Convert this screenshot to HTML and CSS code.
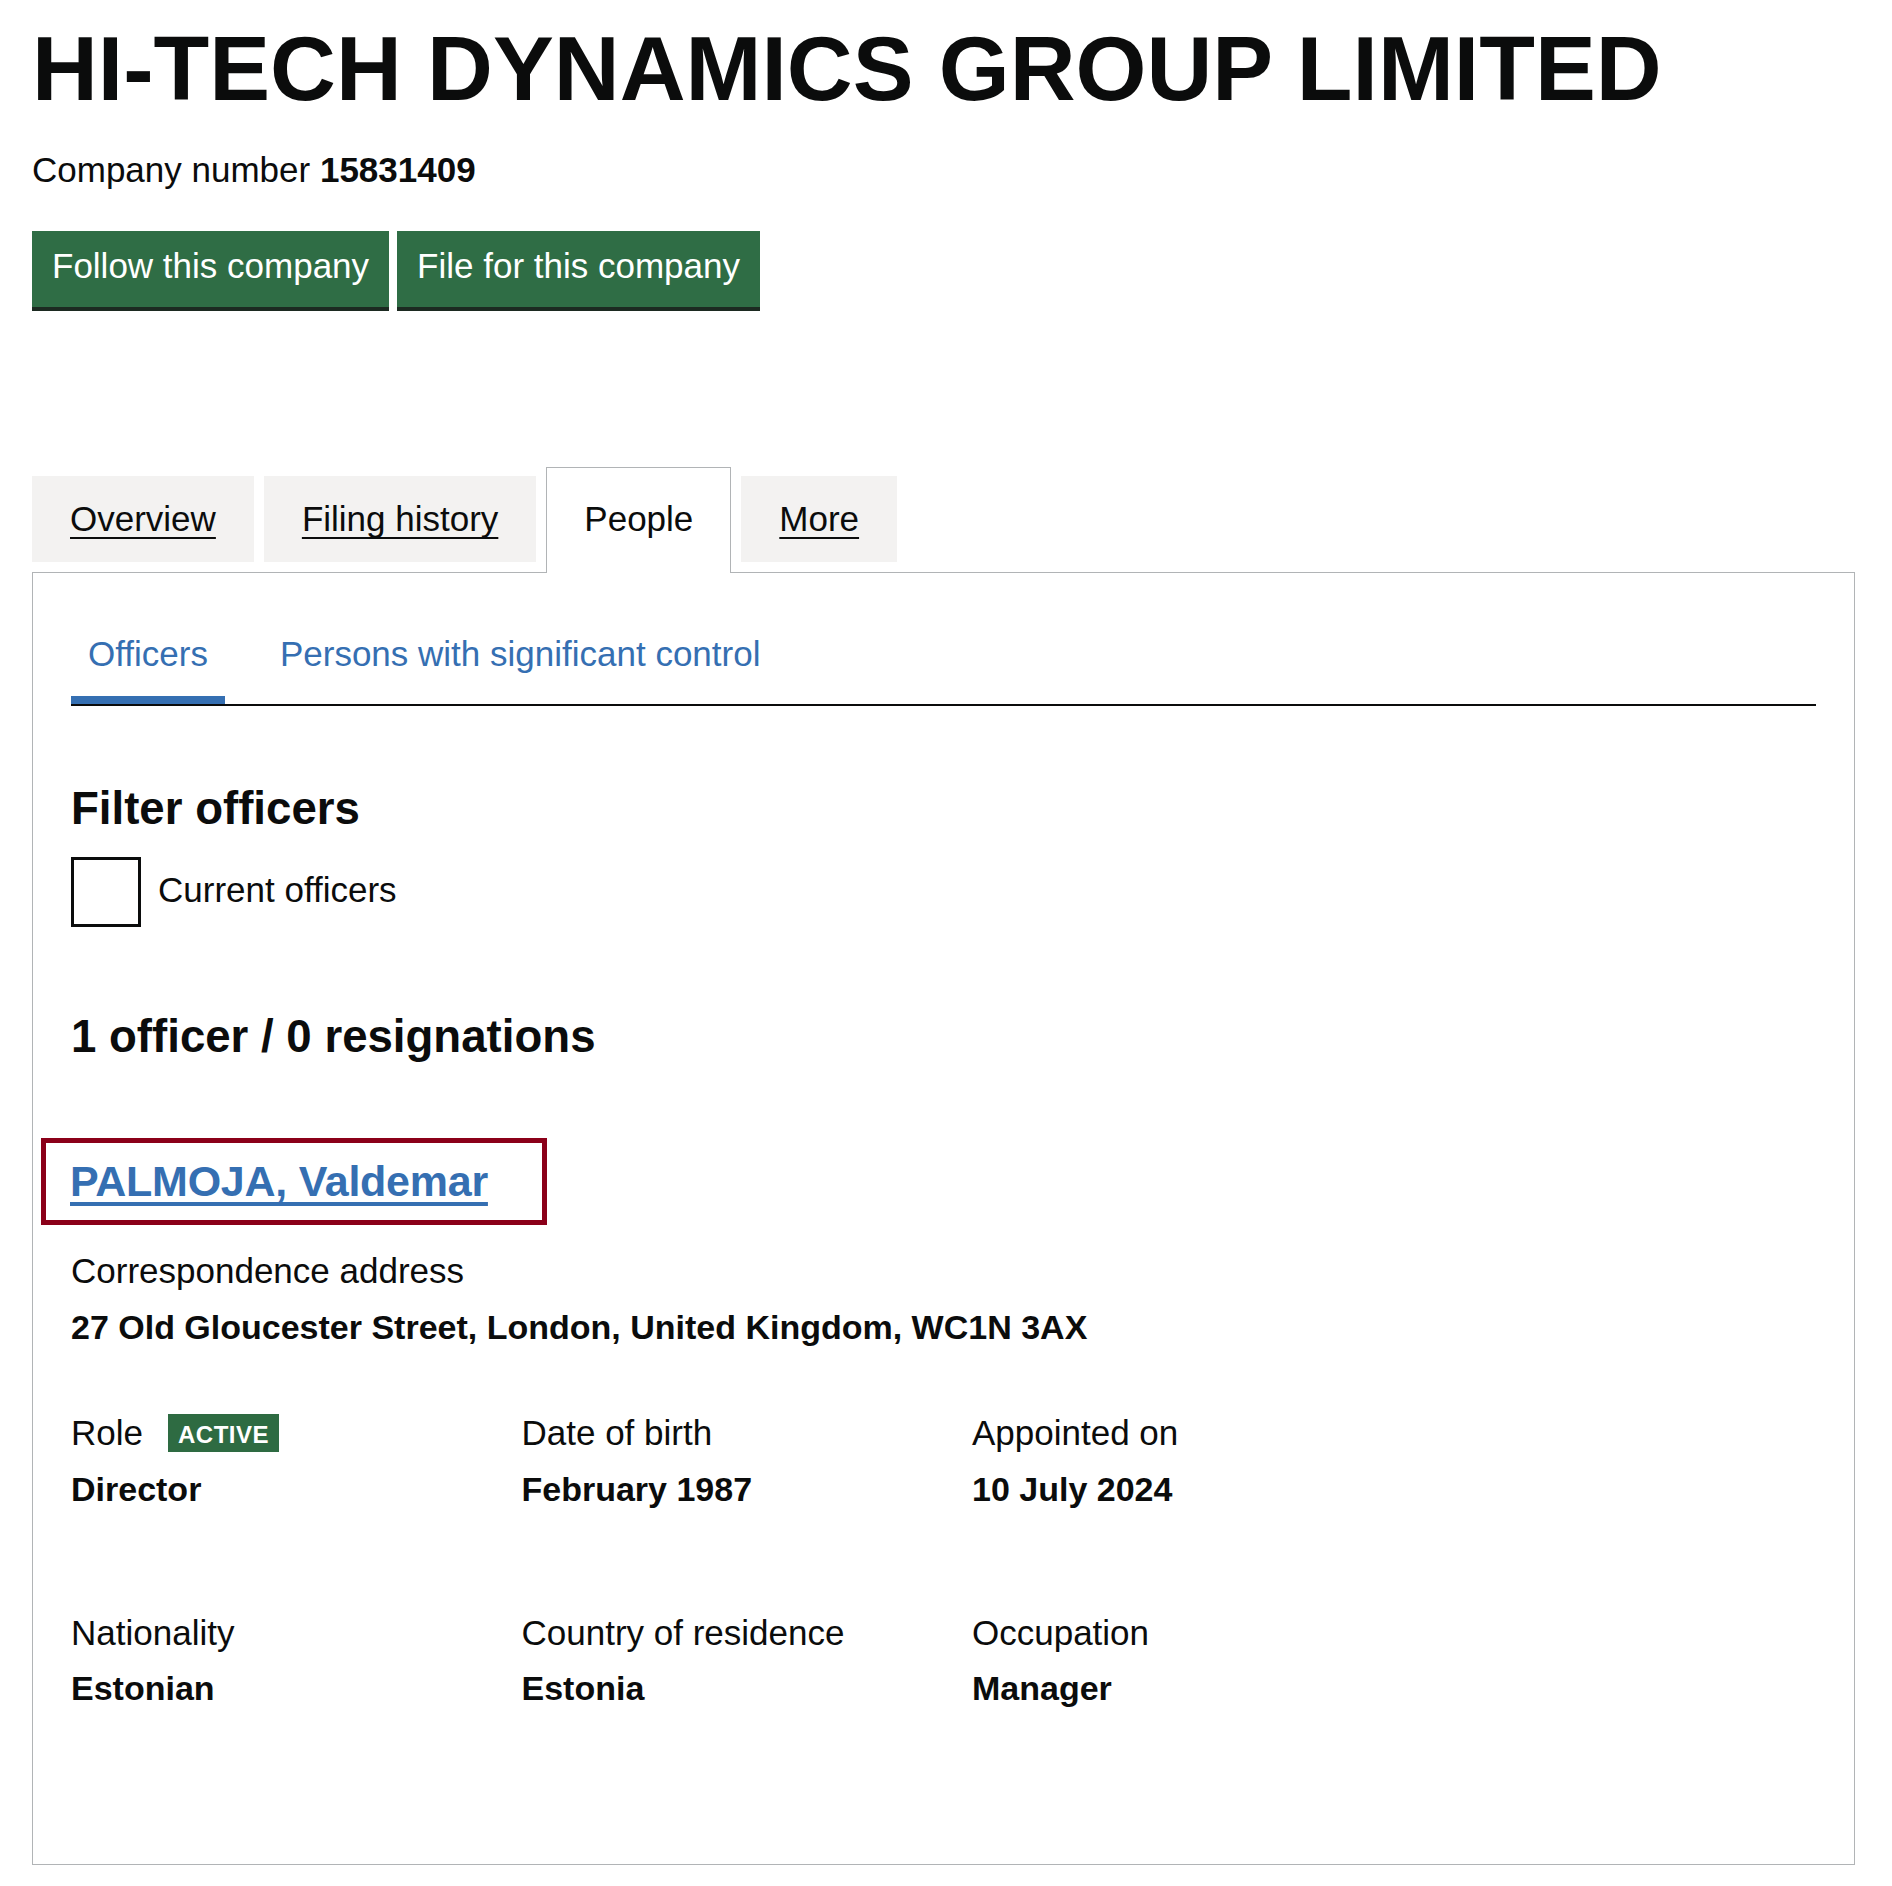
FILE: index.html
```html
<!DOCTYPE html>
<html lang="en">
<head>
<meta charset="utf-8">
<title>HI-TECH DYNAMICS GROUP LIMITED people - Find and update company information</title>
<link rel="stylesheet" href="styles.css">
</head>
<body>
<main class="page">
  <h1 class="company-name">HI-TECH DYNAMICS GROUP LIMITED</h1>
  <p class="company-number">Company number <strong>15831409</strong></p>
  <div class="actions">
    <a class="button" href="#">Follow this company</a>
    <a class="button" href="#">File for this company</a>
  </div>

  <ul class="tabs">
    <li class="tab"><a href="#">Overview</a></li>
    <li class="tab"><a href="#">Filing history</a></li>
    <li class="tab tab--selected"><span>People</span></li>
    <li class="tab"><a href="#">More</a></li>
  </ul>

  <section class="panel">
    <ul class="subnav">
      <li class="subnav-item subnav-item--active"><a href="#">Officers</a></li>
      <li class="subnav-item"><a href="#">Persons with significant control</a></li>
    </ul>

    <h2 class="heading-m filter-heading">Filter officers</h2>
    <label class="checkbox-row">
      <span class="checkbox"></span>
      <span class="checkbox-label">Current officers</span>
    </label>

    <h2 class="heading-m count-heading">1 officer / 0 resignations</h2>

    <div class="officer">
      <div class="highlight">
        <h2 class="officer-name"><a href="#">PALMOJA, Valdemar</a></h2>
      </div>

      <dl class="address">
        <dt>Correspondence address</dt>
        <dd>27 Old Gloucester Street, London, United Kingdom, WC1N 3AX</dd>
      </dl>

      <div class="details">
        <dl class="detail">
          <dt>Role<span class="tag">Active</span></dt>
          <dd>Director</dd>
        </dl>
        <dl class="detail">
          <dt>Date of birth</dt>
          <dd>February 1987</dd>
        </dl>
        <dl class="detail">
          <dt>Appointed on</dt>
          <dd>10 July 2024</dd>
        </dl>
        <dl class="detail">
          <dt>Nationality</dt>
          <dd>Estonian</dd>
        </dl>
        <dl class="detail">
          <dt>Country of residence</dt>
          <dd>Estonia</dd>
        </dl>
        <dl class="detail">
          <dt>Occupation</dt>
          <dd>Manager</dd>
        </dl>
      </div>
    </div>
  </section>
</main>
</body>
</html>
```

FILE: styles.css
```css
html, body {
  margin: 0;
  padding: 0;
  background: #ffffff;
}

body {
  font-family: "Liberation Sans", Arial, sans-serif;
  color: #0b0c0c;
  font-size: 35px;
  line-height: 47.5px;
}

.page {
  width: 1823px;
  padding: 21px 0 0 32px;
}

.company-name {
  margin: 0;
  font-size: 91.2px;
  line-height: 95px;
  font-weight: 700;
}

.company-number {
  margin: 30px 0 0;
  font-size: 35px;
  line-height: 47.5px;
}

.company-number strong {
  font-size: 35px;
  font-weight: 700;
}

.actions {
  display: flex;
  gap: 8px;
  margin-top: 37.5px;
}

.button {
  display: block;
  background: #2f6d45;
  color: #ffffff;
  text-decoration: none;
  font-size: 35px;
  line-height: 42px;
  padding: 14px 20px 20px;
  box-shadow: 0 4px 0 #1c2a21;
}

.tabs {
  display: flex;
  align-items: flex-start;
  list-style: none;
  margin: 169px 0 0;
  padding: 0;
}

.tab {
  margin-right: 10px;
  padding: 19px 38px;
  background: #f3f2f1;
  font-size: 35px;
  line-height: 47.5px;
}

.tab a {
  color: #0b0c0c;
  text-decoration: underline;
  text-decoration-thickness: 2px;
  text-underline-offset: 6px;
  text-decoration-skip-ink: none;
}

.tab--selected {
  position: relative;
  z-index: 1;
  margin-top: -9px;
  margin-bottom: -1px;
  padding: 27px 37px 30px;
  background: #ffffff;
  border: 1px solid #b1b4b6;
  border-bottom: 0;
}

.panel {
  border: 1px solid #b1b4b6;
  padding: 57px 38px 57px;
}

.subnav {
  display: flex;
  list-style: none;
  margin: 0;
  padding: 0;
  border-bottom: 2px solid #0b0c0c;
}

.subnav-item {
  margin-right: 38px;
  padding: 0 17px 18.5px;
  border-bottom: 8px solid transparent;
  font-size: 35px;
  line-height: 47.5px;
}

.subnav-item a {
  color: #356fb2;
  text-decoration: none;
}

.subnav-item--active {
  border-bottom-color: #356fb2;
}

.heading-m {
  margin: 0;
  font-size: 45.6px;
  line-height: 57px;
  font-weight: 700;
}

.filter-heading {
  margin-top: 74px;
}

.checkbox-row {
  display: flex;
  align-items: flex-start;
  margin-top: 20px;
}

.checkbox {
  display: block;
  width: 70px;
  height: 70px;
  box-sizing: border-box;
  border: 3.5px solid #0b0c0c;
  background: #ffffff;
}

.checkbox-label {
  margin-left: 17px;
  padding-top: 9px;
}

.count-heading {
  margin-top: 81px;
}

.highlight {
  width: 506px;
  box-sizing: border-box;
  margin: 73.5px 0 0 -30px;
  padding: 10px 22px 10px 24px;
  border: 5px solid #8b0019;
}

.officer-name {
  margin: 0;
  font-size: 43px;
  line-height: 57px;
  font-weight: 700;
  letter-spacing: -0.25px;
}

.officer-name a {
  color: #356fb2;
  text-decoration: underline;
  text-decoration-thickness: 4px;
  text-underline-offset: 6px;
  text-decoration-skip-ink: none;
}

.address {
  margin: 22px 0 0;
}

.address dt,
.detail dt {
  font-size: 35px;
  line-height: 47.5px;
}

.address dd,
.detail dd {
  margin: 9.5px 0 0;
  font-size: 34px;
  line-height: 47.5px;
  font-weight: 700;
}

.detail dd {
  margin-top: 9px;
}

.details {
  display: grid;
  grid-template-columns: repeat(3, 450.5px);
  row-gap: 95.5px;
  margin: 57.5px 0 94.5px;
}

.detail {
  margin: 0;
}

.tag {
  display: inline-block;
  margin-left: 25px;
  padding: 7px 10px 3px;
  background: #2e6b42;
  color: #ffffff;
  font-size: 24px;
  line-height: 28px;
  font-weight: 700;
  letter-spacing: 0.5px;
  text-transform: uppercase;
  vertical-align: 2px;
}
```
